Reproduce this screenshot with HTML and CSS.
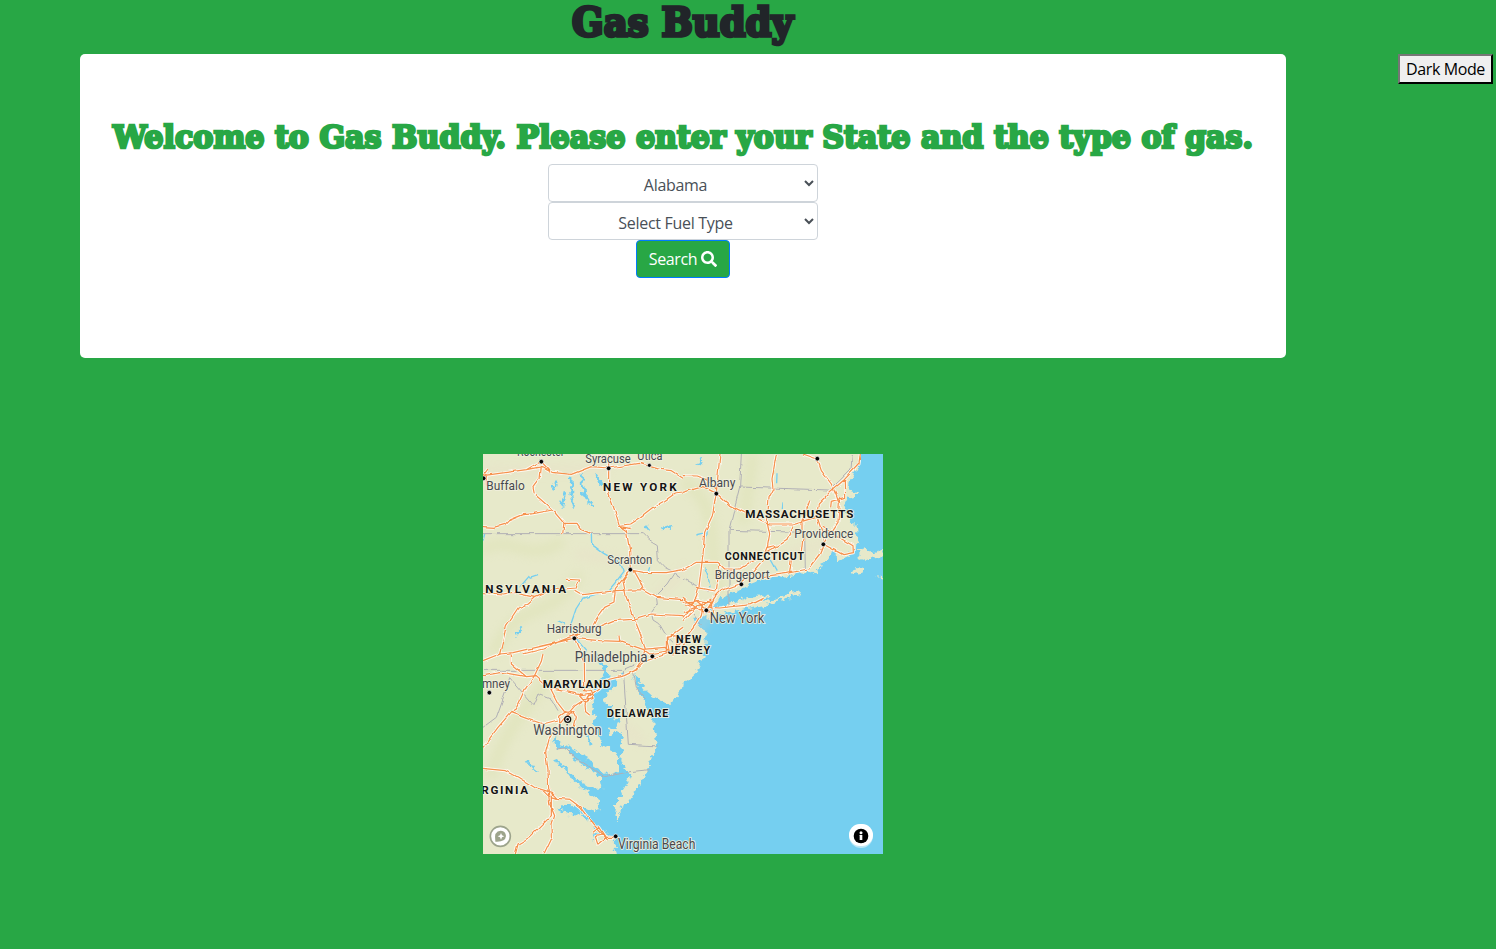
FILE: index.html
```html
<!DOCTYPE html>
<html lang="en">
<head>
<meta charset="utf-8">
<title>Gas Buddy</title>
<link rel="stylesheet" href="styles.css">
</head>
<body>
<div class="page">
<h1 class="title"><svg class="slab slab-title" width="228" height="54" role="img"><text x="3" y="36" textLength="221" lengthAdjust="spacingAndGlyphs">Gas Buddy</text></svg></h1>
<main class="card">
<h2 class="welcome"><svg class="slab slab-welcome" width="1144" height="48"><text x="2" y="34" textLength="1140" lengthAdjust="spacingAndGlyphs">Welcome to Gas Buddy. Please enter your State and the type of gas.</text></svg></h2>
<form class="search">
<select class="field"><option>Alabama</option></select>
<select class="field"><option>Select Fuel Type</option></select>
<button class="submit" type="button"><span>Search</span><svg width="16" height="16" viewBox="0 0 512 512"><path fill="currentColor" d="M505 442.700 405.300 343c-4.500-4.500-10.600-7-17-7H372c27.600-35.300 44-79.700 44-128C416 93.100 322.900 0 208 0S0 93.100 0 208s93.100 208 208 208c48.300 0 92.700-16.400 128-44v16.300c0 6.400 2.500 12.500 7 17l99.700 99.700c9.400 9.400 24.600 9.400 33.900 0l28.300-28.300c9.400-9.400 9.400-24.600.1-34zM208 336c-70.700 0-128-57.200-128-128 0-70.700 57.200-128 128-128 70.700 0 128 57.200 128 128 0 70.700-57.200 128-128 128z"/></svg></button>
</form>
</main>
<button class="mode" type="button">Dark Mode</button>
<section class="map">
<svg width="400" height="400" viewBox="0 0 1200 1200">
<defs>
<filter id="rough" x="0" y="0" width="100%" height="100%"><feTurbulence type="fractalNoise" baseFrequency=".06" numOctaves="3" seed="4"/><feDisplacementMap in="SourceGraphic" scale="26" xChannelSelector="R" yChannelSelector="G"/></filter>
<filter id="wiggle" x="0" y="0" width="100%" height="100%"><feTurbulence type="fractalNoise" baseFrequency=".03" numOctaves="2" seed="8"/><feDisplacementMap in="SourceGraphic" scale="12" xChannelSelector="R" yChannelSelector="G"/></filter>
<filter id="soft"><feGaussianBlur stdDeviation="14"/></filter>
<path id="roads" d="M0 65 130 47 177 38 207 55 265 61 325 38 377 42 470 28 530 46 565 50 600 73M130 47 158 31 175 23 198 48M172 36 168 76 150 100 154 120 209 168 243 208 282 208 295 227 325 239M243 208 239 240M0 218 35 220 66 211 77 200 121 182 150 179 209 168M0 65 15 45M10 60V95M377 0V119L399 180 410 217 430 230 440 290 442 347 420 381 430 430 452 490 470 535 487 585M410 214 440 210 468 192 510 160 545 140 574 120 600 117M410 217 443 224M442 347 480 355 550 356 600 347M442 347 397 404 393 447 365 460 340 495 329 517 290 540 274 553M453 350 470 380 480 405M0 416 60 420 90 415 155 430 205 408 280 402 290 378 252 376M275 409 298 422 398 410 480 407 520 430 600 437M155 430 133 450 105 462 70 515 60 560 50 600 0 620M50 600 90 596 180 575 274 553 350 560 410 562 480 586 545 580 570 600 610 565M120 600 180 585 235 560 340 520 390 500 450 496 505 480 600 485M410 562 408 545M274 553 290 590 304 620 305 710M487 585 475 620 455 650 424 665 370 678 350 705 320 727 276 755 250 785 222 820 198 857 188 895 195 950 197 1005M455 650 480 625 550 600M480 586 500 600 560 590M0 665 55 655 130 668 160 665 203 704 225 748 246 775 270 773 280 792 274 820 246 832 230 815 230 787 250 772M85 600V630L130 668 154 666 175 622 180 600M154 666 130 700 100 765 83 776 45 820 0 880M83 776 130 793 180 810 225 798M203 704 300 724M300 710 322 712 330 733 305 743 290 726 320 721 306 750 308 770 320 780M0 943 70 950 105 970 154 1000 205 1015 222 1033 260 1036 290 1058 330 1110 368 1150 395 1150M195 1005 200 1050 215 1085 207 1110 208 1150 184 1200M205 1015 205 1085 140 1150 105 1170 97 1200M180 1010 195 1025 220 1033M711 0 700 117 688 185 665 235 660 300 648 400 640 430 600 490M600 65 643 66 668 76 700 105M600 115 660 98 700 118 740 154 795 181 860 210 930 210 965 200 1015 185M880 0 867 75 870 105 858 128 853 205 860 240 853 280 838 320 800 365 770 390 715 410 695 430 670 470M600 347 640 325 705 325 725 345 770 345 805 322 870 285 910 260 931 214M853 280 880 274M960 0 1003 15 1015 50 1045 90 1062 130 1067 145M1132 0 1128 30 1084 77 1045 110 1006 150 1000 185 1018 240 1022 270 1010 300 975 345 910 358 840 368M960 205 960 250 955 295M980 140 960 200M926 310 920 355M1084 77 1085 130 1045 142 1043 160M1070 130 1065 205 1020 270 1080 302 1111 296 1110 275 1060 245 1020 220M695 430 680 460 710 462 805 452 842 433M600 445 645 440 685 445 690 490 670 465 640 440 610 455M600 475 650 455 685 435M640 400 700 411 710 330M600 500 645 455 690 440M662 450 655 485 640 510 600 560 550 600M550 600 550 550 580 545 580 575M560 600 552 555 600 520M600 430 650 470 680 475M330 1135 350 1120 370 1150 345 1170 337 1145 360 1140 375 1160"/>
</defs>
<rect width="1200" height="1200" fill="#75cff0"/>
<g filter="url(#rough)" fill="#e7e9ca">
<path d="M-30-30H1145L1125 25 1113 62 1098 82 1093 108 1130 120 1097 130 1082 160 1092 187 1105 205 1122 222 1127 260 1115 292 1088 310 1062 326 1057 290 1046 278 1037 318 1012 335 1010 350 950 360 880 372 828 380 800 391 770 407 725 424 702 443 684 462 668 485 635 492 632 510 667 530 668 575 660 610 640 655 618 675 602 688 600 706 580 730 562 750 530 742 510 728 485 705 466 680 452 655 452 680 470 712 484 740 490 765 510 790 513 830 525 865 518 890 504 905 500 940 486 965 465 1000 440 1040 415 1058 404 1100 397 1080 400 1040 425 1000 445 958 425 948 415 920 418 890 412 870 423 845 405 828 378 844 375 825 400 820 410 800 392 786 385 760 368 750 364 728 385 705 402 690 403 670 422 665 418 655 390 670 372 665 372 640 340 600 350 630 362 660 352 680 335 700 324 735 334 780 330 805 350 850 355 870 400 895 408 915 408 950 372 962 348 945 328 932 300 880 295 835 312 850 322 876 345 900 347 930 300 905 262 880 235 870 218 845 214 870 235 885 255 888 270 912 310 940 350 966 358 1000 343 1005 315 995 280 972 250 938 210 915 208 922 245 944 268 978 298 1005 345 1036 350 1066 320 1072 280 1052 240 1056 226 1064 255 1080 298 1082 330 1110 340 1130 325 1160 345 1145 370 1135 395 1145 396 1170 405 1220 410 1230H-30Z"/>
<path d="M673 499 674 478 700 461 747 447 798 430 837 422 857 427 831 442 878 437 900 425 938 413 957 411 951 424 908 432 874 448 810 462 745 472 692 487Z"/>
<path d="M1128 287 1150 282 1168 295 1200 288 1210 314 1178 307 1145 320 1131 316Z"/><path d="M1104 359 1118 339 1140 341 1142 353Z"/><path d="M1176 367 1210 370 1205 378Z"/>
</g>
<g fill="none" filter="url(#soft)" opacity=".33"><path stroke="#d7dea7" stroke-width="34" d="M0 290C80 230 130 340 240 260M30 600C110 420 190 520 290 360M600 80C730 160 660 300 720 420M20 970C80 790 150 750 200 660M810 0 780 210"/><path stroke="#ead9c7" stroke-width="22" d="M520 430 610 340M280 300 500 330M640 540 700 450M830 330 1080 250M10 50 380 45M420 810 480 870"/></g>
<g class="rivers" filter="url(#rough)"><path d="M222 76 211 112M264 72 267 122 276 164M246 118 233 160M295 62 302 118 325 154M338 64 355 94M133 922 158 952M96 546 118 522M535 222 568 217M480 220 500 224M645 35 660 10M310 835 325 870"/></g>
<g class="rivers narrow" filter="url(#wiggle)"><path d="M325 240 326 271 362 298 410 325 423 352 400 382 376 410 300 432 279 465 262 515M280 555 311 592M681 400 675 365 665 340M140 365 110 400M165 362 140 370M500 340 495 355M224 500 246 510M900 145 898 165M860 315 880 350M885 55 884 88M0 260 5 240M674 215 670 255M640 243 660 238"/></g>
<g class="borders" filter="url(#wiggle)"><path d="M0 239H481L500 258 523 272 526 320 545 340 577 356 555 390 520 425 523 451 505 476 510 498 527 509 545 540 570 565M600 375 640 395 680 412M738 457V228L770 99 1040 108 1070 80 1104 45 1108 0M738 229 965 235 967 350M0 649H421L436 871 525 876M425 645 454 632M0 820 40 790 70 705 80 674 150 755 165 720 205 735 225 770M220 885 250 882 276 910 330 945 362 969 442 953 500 947M452 658 460 700 487 735M630 480 655 512M770 99 775 0M577 356 590 375"/></g>
<g filter="url(#wiggle)"><use class="casing" href="#roads"/><use class="roads" href="#roads"/></g>
<g class="place"><text x="102" y="6" textLength="142" lengthAdjust="spacingAndGlyphs">Rochester</text><text x="307" y="26" textLength="136" lengthAdjust="spacingAndGlyphs">Syracuse</text><text x="463" y="17" textLength="75" lengthAdjust="spacingAndGlyphs">Utica</text><text x="10" y="108" textLength="115" lengthAdjust="spacingAndGlyphs">Buffalo</text><text x="373" y="330" textLength="135" lengthAdjust="spacingAndGlyphs">Scranton</text><text x="191" y="536" textLength="165" lengthAdjust="spacingAndGlyphs">Harrisburg</text><text x="648" y="100" textLength="109" lengthAdjust="spacingAndGlyphs">Albany</text><text x="934" y="252" textLength="177" lengthAdjust="spacingAndGlyphs">Providence</text><text x="695" y="374" textLength="165" lengthAdjust="spacingAndGlyphs">Bridgeport</text><text class="large" x="680" y="507" textLength="164" lengthAdjust="spacingAndGlyphs">New York</text><text class="large" x="275" y="624" textLength="219" lengthAdjust="spacingAndGlyphs">Philadelphia</text><text x="-3" y="701" textLength="84" lengthAdjust="spacingAndGlyphs">mney</text><text class="large" x="151" y="843" textLength="205" lengthAdjust="spacingAndGlyphs">Washington</text><text class="large" x="405" y="1184" textLength="232" lengthAdjust="spacingAndGlyphs">Virginia Beach</text></g>
<g class="state"><text x="360" y="111" textLength="221">NEW YORK</text><text x="7" y="416" textLength="242">NSYLVANIA</text><text x="787" y="191" textLength="324">MASSACHUSETTS</text><text class="small" x="725" y="317" textLength="238">CONNECTICUT</text><text class="small" x="579" y="567" textLength="76">NEW</text><text class="small" x="554" y="601" textLength="127">JERSEY</text><text x="179" y="703" textLength="204">MARYLAND</text><text class="small" x="372" y="788" textLength="184">DELAWARE</text><text x="-5" y="1019" textLength="140">RGINIA</text></g>
<g fill="#050505" stroke="#fff" stroke-width="2"><circle cx="175" cy="23" r="7"/><circle cx="377" cy="43" r="7"/><circle cx="499" cy="34" r="6"/><circle cx="2" cy="73" r="7"/><circle cx="442" cy="347" r="7"/><circle cx="274" cy="553" r="7"/><circle cx="700" cy="119" r="7"/><circle cx="1003" cy="14" r="7"/><circle cx="1021" cy="271" r="7"/><circle cx="775" cy="391" r="7"/><circle cx="670" cy="469" r="7"/><circle cx="508" cy="607" r="7"/><circle cx="19" cy="716" r="7"/><circle cx="398" cy="1147" r="7"/></g>
<circle cx="254" cy="796" r="9" fill="#fff" stroke="#111" stroke-width="4"/><circle cx="254" cy="796" r="4" fill="#111"/>
<g><circle cx="52" cy="1147" r="30" fill="#fff" stroke="#9da48c" stroke-width="5"/><path d="M37 1163Q32 1129 54 1130 68 1131 69 1146 67 1165 37 1163Z" fill="#9da48c"/><path d="m54 1137 3 7 7 3-7 3-3 7-3-7-7-3 7-3Z" fill="#fff"/></g>
<g><rect x="1098" y="1110" width="72" height="72" rx="36" fill="#bce7f6"/><rect x="1098" y="1110" width="72" height="66" rx="33" fill="#fff"/><circle cx="1134" cy="1146" r="22"/><circle cx="1134" cy="1136" r="4.500" fill="#fff"/><path d="M1129 1143h9v15h-8v-12z" fill="#fff"/></g>
</svg>
</section>
</div>
</body>
</html>
```
FILE: styles.css
```css
* { box-sizing: border-box; }
body { margin: 0; height: 949px; overflow: hidden; background: #28a745; font: 16px/24px "Open Sans", sans-serif; letter-spacing: -.3px; color: #212529; }
.page { display: grid; grid-template-columns: 80px 1206px 80px 1fr; grid-template-rows: 54px 304px 496px; }
.title { grid-column: 2; margin: 0; text-align: center; height: 54px; line-height: 0; letter-spacing: 0; }
.slab { display: inline-block; overflow: visible; }
.slab text { font-family: "DejaVu Serif", serif; font-weight: 700; }
.slab-title text { font-size: 39.5px; fill: #212529; stroke: #212529; stroke-width: 3.4px; }
.slab-welcome text { font-size: 31px; fill: #28a745; stroke: #28a745; stroke-width: 2.7px; }
.card { grid-column: 2; grid-row: 2; background: #fff; border-radius: 5px; padding: 60px 31px 0; }
.welcome { margin: 0; height: 50px; line-height: 0; text-align: center; letter-spacing: 0; }
.search { display: flex; flex-direction: column; align-items: center; }
.field { width: 270px; height: 38px; padding: 8px 12px 6px 9px; border: 1px solid #ced4da; border-radius: 4px; background: #fff; color: #495057; font: inherit; line-height: 22px; letter-spacing: inherit; text-align: center; }
.submit { display: flex; align-items: center; justify-content: center; gap: 4px; width: 94px; height: 38px; padding: 0; border: 1px solid #007bff; border-radius: 4px; background: #28a745; color: #fff; font: inherit; letter-spacing: -.4px; }
.mode { grid-column: 4; grid-row: 2; justify-self: end; width: 95px; height: 30px; margin-right: 3px; padding: 0; border: 2px outset #767676; border-color: #767676 #212121 #212121 #767676; background: #efefef; color: #000; font: inherit; letter-spacing: -.4px; white-space: nowrap; }
.map { grid-column: 2; grid-row: 3; justify-self: center; width: 400px; height: 400px; margin-top: 96px; overflow: hidden; }
.map svg { display: block; letter-spacing: 0; }
.rivers { fill: none; stroke: #75cff0; stroke-width: 8; }
.narrow { stroke-width: 4; }
.borders { fill: none; stroke: #b0afb5; stroke-width: 3; }
.casing { fill: none; stroke: #fffaf2; stroke-width: 9; stroke-linejoin: round; }
.roads { fill: none; stroke: #f5914c; stroke-width: 3.7; stroke-linejoin: round; }
.place text { font: 38px Roboto, sans-serif; fill: #46484d; stroke: #f1f0dd; stroke-width: 5px; paint-order: stroke; }
.place .large { font-size: 42px; }
.state text { font: 700 35px Roboto, sans-serif; fill: #141414; stroke: #f3f2df; stroke-width: 5px; paint-order: stroke; }
.state .small { font-size: 32px; }
```
